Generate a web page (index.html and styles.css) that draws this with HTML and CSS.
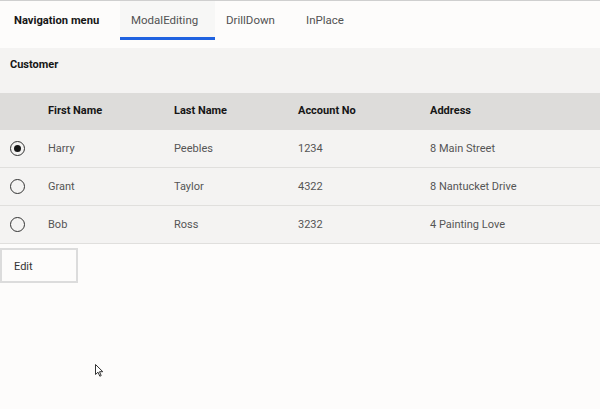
FILE: index.html
```html
<!DOCTYPE html>
<html>
<head>
<meta charset="utf-8">
<link rel="stylesheet" href="styles.css">
</head>
<body>
<div class="page">
  <nav class="tabs">
    <div class="brand">Navigation menu</div>
    <div class="tab active">ModalEditing</div>
    <div class="tab">DrillDown</div>
    <div class="tab">InPlace</div>
  </nav>
  <section class="panel">
    <div class="title">Customer</div>
    <div class="table">
      <div class="row head">
        <div class="c sel"></div>
        <div class="c first">First Name</div>
        <div class="c last">Last Name</div>
        <div class="c acct">Account No</div>
        <div class="c addr">Address</div>
      </div>
      <div class="row">
        <div class="c sel"><span class="radio checked"></span></div>
        <div class="c first">Harry</div>
        <div class="c last">Peebles</div>
        <div class="c acct">1234</div>
        <div class="c addr">8 Main Street</div>
      </div>
      <div class="row">
        <div class="c sel"><span class="radio"></span></div>
        <div class="c first">Grant</div>
        <div class="c last">Taylor</div>
        <div class="c acct">4322</div>
        <div class="c addr">8 Nantucket Drive</div>
      </div>
      <div class="row">
        <div class="c sel"><span class="radio"></span></div>
        <div class="c first">Bob</div>
        <div class="c last">Ross</div>
        <div class="c acct">3232</div>
        <div class="c addr">4 Painting Love</div>
      </div>
    </div>
  </section>
  <div class="actions">
    <button class="btn">Edit</button>
  </div>
  <svg class="cursor" width="9" height="13" viewBox="0 0 9 13"><path d="M0.5 0.5 L0.5 10.5 L3 8.2 L4.8 12.2 L6.2 11.6 L4.5 7.7 L7.8 7.7 Z" fill="#fff" stroke="#333" stroke-width="1"/></svg>
</div>
</body>
</html>
```
FILE: styles.css
```css
* { box-sizing: border-box; }
html, body { margin: 0; padding: 0; }
body {
  background: #fdfcfb;
  font-family: Roboto, "Liberation Sans", sans-serif;
  color: #161616;
  width: 600px;
  height: 409px;
  overflow: hidden;
}
.page { position: relative; height: 409px; border-top: 1px solid #cfcfcf; }
.tabs {
  display: flex;
  height: 39px;
  align-items: stretch;
}
.brand {
  flex: 0 0 120px;
  white-space: nowrap;
  font-weight: 700;
  font-size: 11.2px;
  padding: 0 0 0 14px;
  display: flex;
  align-items: center;
  color: #161616;
}
.tab {
  font-size: 11.5px;
  color: #525252;
  display: flex;
  align-items: center;
  padding: 1px 0 0 11px;
  border-bottom: 3px solid transparent;
  white-space: nowrap;
}
.tab.active {
  flex: 0 0 95px;
  background: #f7f7f6;
  border-bottom-color: #1f62e0;
}
.tabs .tab:nth-child(3) { flex: 0 0 80px; }
.panel {
  margin-top: 8px;
  background: #f4f3f2;
}
.title {
  height: 45px;
  font-size: 11px;
  font-weight: 700;
  padding: 10px 10px 0;
}
.row {
  display: flex;
  height: 38px;
  align-items: center;
  border-bottom: 1px solid #e0dfdd;
  font-size: 11px;
  color: #555;
  padding-bottom: 1px;
}
.row.head {
  background: #dddcda;
  height: 37px;
  border-bottom: none;
  font-weight: 700;
  color: #161616;
  padding-bottom: 2px;
}
.c.sel { width: 48px; display: flex; align-items: center; padding-left: 10px; }
.c.first { width: 126px; }
.c.last { width: 124px; }
.c.acct { width: 132px; }
.c.addr { flex: 1; }
.radio {
  width: 15px; height: 15px;
  border: 1px solid #333;
  border-radius: 50%;
  display: flex; align-items: center; justify-content: center;
}
.radio.checked::after {
  content: "";
  width: 7px; height: 7px;
  border-radius: 50%;
  background: #161616;
}
.actions { padding-top: 4px; }
.btn {
  width: 78px; height: 35px;
  border: 2px solid #dcdcdc;
  background: #fdfcfb;
  font-family: inherit;
  font-size: 11px;
  color: #333;
  text-align: left;
  padding: 1px 0 0 12px;
  margin: 0;
}
.cursor { position: absolute; left: 95px; top: 363px; }
```
